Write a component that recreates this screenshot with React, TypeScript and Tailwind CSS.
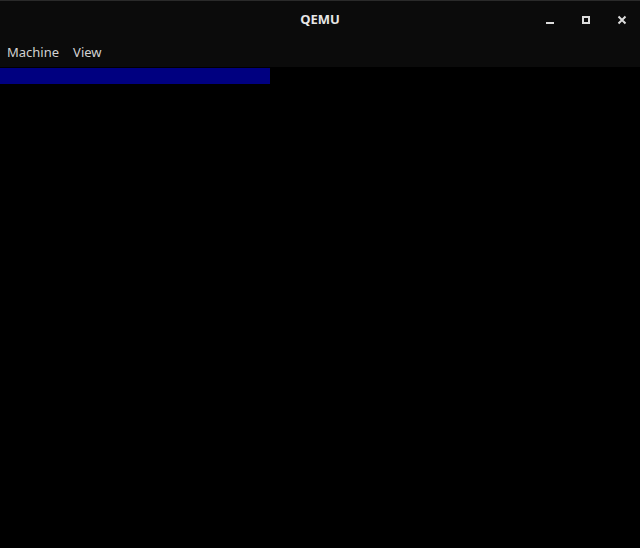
export default function App() {
  return (
    <div className="w-[640px] h-[548px] bg-black flex flex-col overflow-hidden" style={{ fontFamily: '"Noto Sans", "Open Sans", sans-serif' }}>
      <div className="h-[38px] shrink-0 bg-[#0b0b0b] border-t border-[#2a2a2a] relative flex items-center justify-center">
        <span className="text-[13px] font-bold text-[#e6e6e6]">QEMU</span>
        <div className="absolute right-0 top-0 h-full flex items-center">
          <div className="w-[36px] h-full flex items-center justify-center">
            <div className="w-[8px] h-[2px] bg-[#dcdcdc] mt-[6px]" />
          </div>
          <div className="w-[36px] h-full flex items-center justify-center">
            <div className="w-[8px] h-[8px] border-2 border-[#dcdcdc]" />
          </div>
          <div className="w-[36px] h-full flex items-center justify-center">
            <svg width="10" height="10" viewBox="0 0 10 10"><path d="M1.5 1.5L8.5 8.5M8.5 1.5L1.5 8.5" stroke="#dcdcdc" strokeWidth="2" /></svg>
          </div>
        </div>
      </div>
      <div className="h-[29px] shrink-0 bg-[#0b0b0b] flex items-center gap-[14px] px-[7px] text-[13px] text-[#d2d2d2]">
        <span>Machine</span>
        <span>View</span>
      </div>
      <div className="h-[16px] w-[270px] bg-[#000080] shrink-0 mt-px" />
    </div>
  );
}
